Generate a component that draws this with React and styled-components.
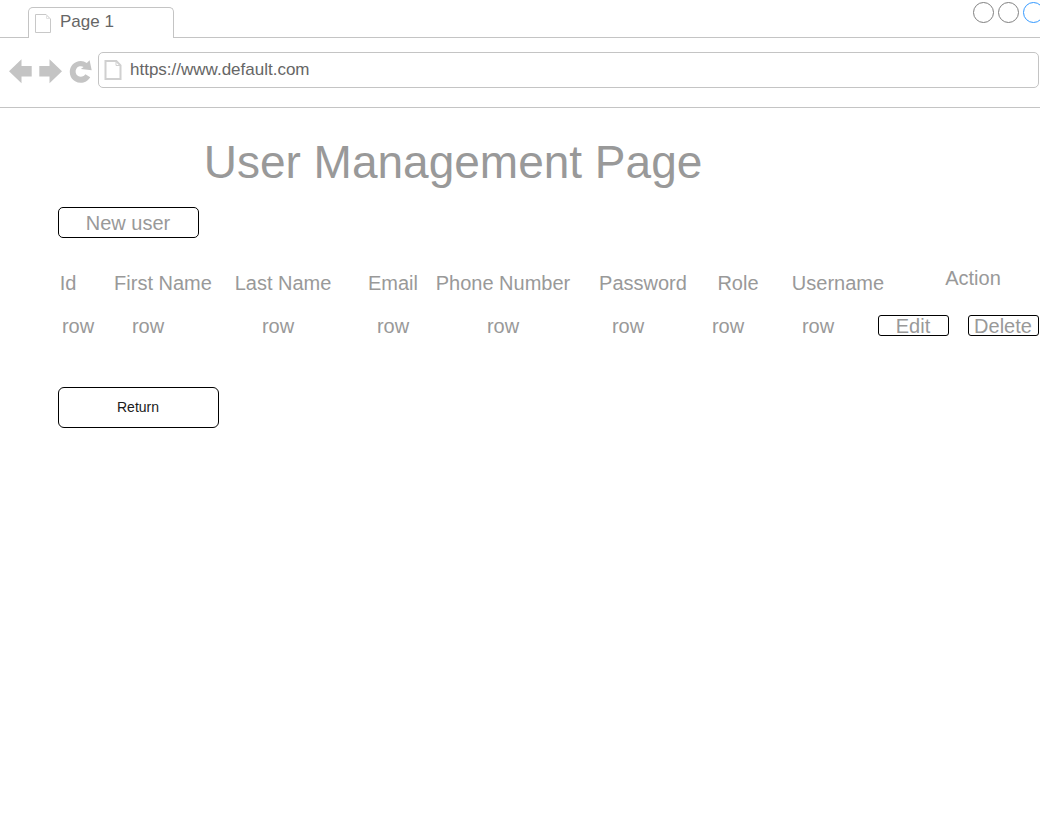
import React from "react";
import styled, { createGlobalStyle } from "styled-components";

const GlobalStyle = createGlobalStyle`
  * { box-sizing: border-box; }
  html, body { margin: 0; background: #fff; overflow: hidden; }
  body { font-family: "Liberation Sans", Arial, sans-serif; }
`;

const Window = styled.div`
  width: 1040px;
  height: 817px;
  overflow: hidden;
  background: #fff;
`;

const TabStrip = styled.header`
  display: flex;
  height: 38px;
  align-items: flex-end;
`;

const StripLine = styled.div`
  width: ${(p) => p.$width};
  flex: ${(p) => (p.$width ? "none" : "1")};
  height: 38px;
  border-bottom: 1px solid #c4c4c4;
`;

const Tab = styled.div`
  display: flex;
  align-items: center;
  width: 146px;
  height: 31px;
  padding: 0 0 0 6px;
  border: 1px solid #c4c4c4;
  border-bottom: 0;
  border-radius: 5px 5px 0 0;
  font-size: 17px;
  color: #666;
`;

const TabTitle = styled.span`
  margin: -3px 0 0 8px;
  line-height: 20px;
`;

const Controls = styled.div`
  display: flex;
  justify-content: flex-end;
  gap: 4px;
  margin: 2px -4px 0 0;
`;

const Circle = styled.span`
  width: 21px;
  height: 21px;
  border: 1px solid ${(p) => p.$color};
  border-radius: 50%;
`;

const Toolbar = styled.nav`
  display: flex;
  height: 70px;
  padding: 14px 1px 0 9px;
  border-bottom: 1px solid #c4c4c4;
`;

const NavIcons = styled.svg`
  display: block;
  flex: none;
  width: 89px;
  height: 36px;
  fill: #c4c4c4;
`;

const AddressBar = styled.div`
  display: flex;
  flex: 1;
  align-items: center;
  height: 36px;
  padding-left: 5px;
  border: 1px solid #c4c4c4;
  border-radius: 5px;
  font-size: 17px;
  color: #666;
`;

const Url = styled.span`
  margin: 0 0 0 8px;
  line-height: 20px;
`;

const FileIcon = styled.svg`
  display: block;
  flex: none;
  fill: none;
  stroke: ${(p) => p.$color};
`;

const Content = styled.main`
  padding-left: 58px;
  font-size: 20px;
  line-height: 23px;
  color: #999;
`;

const Title = styled.h1`
  width: 790px;
  margin: 0;
  padding-top: 28px;
  font-size: 46px;
  font-weight: 400;
  line-height: 53px;
  text-align: center;
`;

const Button = styled.button`
  display: flex;
  flex: none;
  align-items: center;
  justify-content: center;
  width: ${(p) => p.$width}px;
  height: ${(p) => p.$height}px;
  margin: 0 0 0 ${(p) => p.$gap || 0}px;
  padding: ${(p) => p.$pad || "1px 1px 0 0"};
  border: 1px solid #000;
  border-radius: ${(p) => p.$radius}px;
  background: #fff;
  color: ${(p) => p.$color || "#999"};
  font: ${(p) => p.$size || 20}px/1.15 "Liberation Sans", Arial, sans-serif;
`;

const Toolline = styled.div`
  margin-top: ${(p) => p.$top}px;
`;

const Row = styled.div`
  display: flex;
  height: 23px;
  margin-top: ${(p) => p.$top}px;
`;

const Cell = styled.div`
  flex: none;
  width: ${(p) => p.$width}px;
  margin-left: ${(p) => p.$gap}px;
  margin-top: ${(p) => p.$top || 0}px;
  text-align: center;
  white-space: nowrap;
`;

const headings = [
  { label: "Id", width: 20, gap: 0 },
  { label: "First Name", width: 110, gap: 30 },
  { label: "Last Name", width: 100, gap: 15 },
  { label: "Email", width: 60, gap: 30 },
  { label: "Phone Number", width: 140, gap: 10 },
  { label: "Password", width: 100, gap: 20 },
  { label: "Role", width: 50, gap: 20 },
  { label: "Username", width: 100, gap: 25 },
  { label: "Action", width: 60, gap: 55, top: -5 },
];

const rowGaps = [0, 30, 90, 75, 70, 85, 60, 50];

function App() {
  return (
    <Window>
      <GlobalStyle />
      <TabStrip>
        <StripLine $width="28px" />
        <Tab>
          <FileIcon $color="#c8c8c8" width="17" height="20" viewBox="0 0 17 20">
            <path d="M.5 1.5H11L15.5 6V19.5H.5Z" />
            <path d="M11.5 1.5V5.5H15.5" stroke="#e2e2e2" />
          </FileIcon>
          <TabTitle>Page 1</TabTitle>
        </Tab>
        <StripLine>
          <Controls>
            <Circle $color="#808080" />
            <Circle $color="#808080" />
            <Circle $color="#3399ff" />
          </Controls>
        </StripLine>
      </TabStrip>
      <Toolbar>
        <NavIcons viewBox="0 0 89 36">
          <path d="M0 19.3 12.5 7.3V14H22.7V24.5H12.5V31.3Z" />
          <path d="M53 19.3 40.5 7.3V14H30.3V24.5H40.5V31.3Z" />
          <path d="M80.6 8.3 82.7 18.3 71.8 16.9 74.6 14.9A5.3 5.3 0 1 0 76.4 22.2L81.2 25.2A10.9 10.9 0 1 1 77.8 10.9Z" />
        </NavIcons>
        <AddressBar>
          <FileIcon $color="#d0d0d0" width="18" height="22" viewBox="0 0 18 22" strokeWidth="2">
            <path d="M1.5 2H12.3L16.5 6.3V20H1.5Z" />
            <path d="M12 2.5V6.5H16" strokeWidth="1" />
          </FileIcon>
          <Url>https://www.default.com</Url>
        </AddressBar>
      </Toolbar>
      <Content>
        <Title>User Management Page</Title>
        <Toolline $top={18}>
          <Button $width={141} $height={31} $radius={5}>New user</Button>
        </Toolline>
        <Row $top={34}>
          {headings.map((h) => (
            <Cell key={h.label} $width={h.width} $gap={h.gap} $top={h.top}>{h.label}</Cell>
          ))}
        </Row>
        <Row $top={20}>
          {rowGaps.map((gap, i) => (
            <Cell key={i} $width={40} $gap={gap}>row</Cell>
          ))}
          <Button $width={71} $height={21} $radius={3} $gap={40}>Edit</Button>
          <Button $width={71} $height={21} $radius={3} $gap={19}>Delete</Button>
        </Row>
        <Toolline $top={49}>
          <Button $width={161} $height={41} $radius={6} $size={14} $color="#1a1a1a" $pad="0 1px 1px 0">Return</Button>
        </Toolline>
      </Content>
    </Window>
  );
}

export default App;
